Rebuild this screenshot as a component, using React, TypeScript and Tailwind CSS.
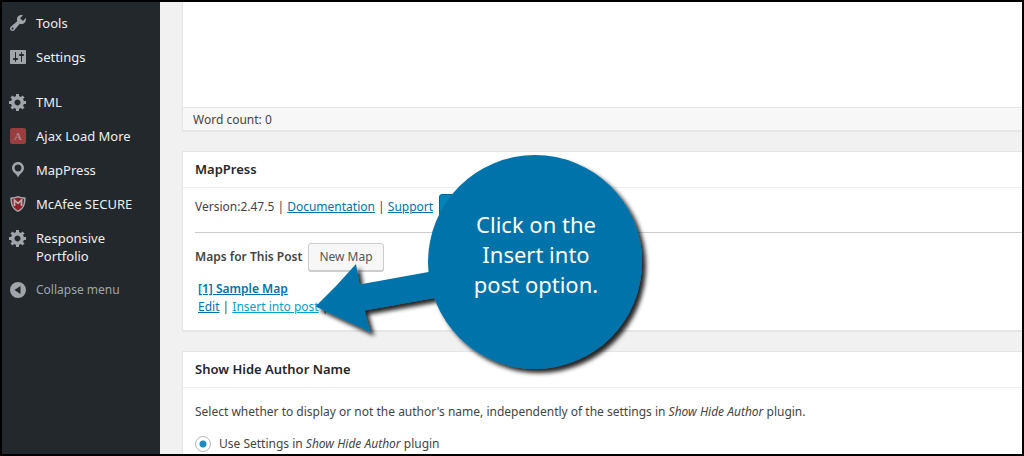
import type { ReactNode } from "react";

function Glyph({ d }: { d: string }) {
  return (
    <svg viewBox="0 0 20 20" className="size-5 shrink-0 fill-[#a0a5aa]" aria-hidden="true">
      <path fillRule="evenodd" d={d} />
    </svg>
  );
}

const gear =
  "M18 12h-2.18c-.17.7-.44 1.35-.81 1.93l1.54 1.54-2.1 2.1-1.54-1.54c-.58.36-1.23.63-1.91.79V19H8v-2.18c-.68-.16-1.33-.43-1.91-.79l-1.54 1.54-2.12-2.12 1.54-1.54c-.36-.58-.63-1.23-.79-1.91H1V9.03h2.17c.16-.7.44-1.35.8-1.94L2.43 5.55l2.1-2.1 1.54 1.54c.58-.37 1.24-.64 1.93-.81V2h3v2.18c.68.16 1.33.43 1.91.79l1.54-1.54 2.12 2.12-1.54 1.54c.36.59.64 1.24.8 1.94H18V12zm-8.5 1.5c1.66 0 3-1.34 3-3s-1.34-3-3-3-3 1.34-3 3 1.34 3 3 3z";
const wrench =
  "M16.68 9.77c-1.34 1.34-3.3 1.67-4.95.99l-5.41 6.52c-.99.99-2.59.99-3.58 0s-.99-2.59 0-3.57l6.52-5.42c-.68-1.65-.35-3.61.99-4.95 1.28-1.28 3.12-1.62 4.72-1.06l-2.89 2.89 2.82 2.82 2.86-2.87c.53 1.58.18 3.39-1.08 4.65zM3.81 16.21c.4.39 1.04.39 1.43 0 .4-.4.4-1.04 0-1.43-.39-.4-1.03-.4-1.43 0-.39.39-.39 1.03 0 1.43z";
const sliders =
  "M18 16V4c0-.55-.45-1-1-1H3c-.55 0-1 .45-1 1v12c0 .55.45 1 1 1h14c.55 0 1-.45 1-1zM8 11h1c.55 0 1 .45 1 1s-.45 1-1 1H8v1.5c0 .28-.22.5-.5.5s-.5-.22-.5-.5V13H6c-.55 0-1-.45-1-1s.45-1 1-1h1V5.5c0-.28.22-.5.5-.5s.5.22.5.5V11zm5-2h-1c-.55 0-1-.45-1-1s.45-1 1-1h1V5.5c0-.28.22-.5.5-.5s.5.22.5.5V7h1c.55 0 1 .45 1 1s-.45 1-1 1h-1v5.5c0 .28-.22.5-.5.5s-.5-.22-.5-.5V9z";
const pin =
  "M10 2C6.69 2 4 4.69 4 8c0 2.02 1.17 3.71 2.53 4.89.43.37 1.18.96 1.85 1.83.74.97 1.41 2.01 1.62 2.71.21-.7.88-1.74 1.62-2.71.67-.87 1.42-1.46 1.85-1.83C14.83 11.71 16 10.02 16 8c0-3.31-2.69-6-6-6zm0 2.56c1.9 0 3.44 1.54 3.44 3.44S11.9 11.44 10 11.44 6.56 9.9 6.56 8 8.1 4.56 10 4.56z";
const collapse =
  "M10 2a8 8 0 1 1 0 16a8 8 0 1 1 0-16zM12.5 6L6.5 10l6 4z";

function AjaxIcon() {
  return (
    <span className="flex size-5 shrink-0 items-center justify-center" aria-hidden="true">
      <span className="flex size-4 items-center justify-center rounded-[2px] bg-[#9c3c3e] font-['Liberation_Serif',serif] text-[11px] leading-none font-bold text-[#b08082]">
        A
      </span>
    </span>
  );
}

function ShieldIcon() {
  return (
    <svg viewBox="0 0 20 20" className="size-5 shrink-0" aria-hidden="true">
      <path d="M2.4 3.6C5.500 3.200 8 2.800 10 2c2 .8 4.500 1.200 7.600 1.600C17.700 11.500 15.500 15.500 10 18 4.500 15.500 2.300 11.500 2.400 3.600z" fill="#a8a8aa" />
      <path d="M3.900 4.900C6 4.600 8.300 4.300 10 3.600c1.700.7 4 1 6.100 1.300C16 10.900 14.300 14.200 10 16.400 5.700 14.200 4 10.900 3.900 4.900z" fill="#8e1f2b" />
      <path d="M6.500 12V6.200L10 9.300l3.500-3.100V12" fill="none" stroke="#b9b0b2" strokeWidth="1.800" />
    </svg>
  );
}

function MenuItem({ icon, children }: { icon: ReactNode; children: ReactNode }) {
  return (
    <li>
      <a href="#" className="flex gap-2 py-2 pr-3 pl-1.5 text-[13px] leading-[18px] text-[#eee]">
        <span className="-my-px">{icon}</span>
        <span>{children}</span>
      </a>
    </li>
  );
}

function Panel({ title, children }: { title: string; children: ReactNode }) {
  return (
    <section className="border border-r-0 border-[#e5e5e5] bg-white shadow-[0_1px_1px_rgba(0,0,0,0.04)]">
      <h2 className="border-b border-[#eee] px-3 py-2 text-[13px] leading-[19px] font-semibold text-[#23282d]">{title}</h2>
      {children}
    </section>
  );
}

function Link({ children }: { children: ReactNode }) {
  return (
    <a href="#" className="text-[#0073aa] underline">
      {children}
    </a>
  );
}

function Callout() {
  return (
    <div className="pointer-events-none absolute top-[151px] left-[310px] h-[230px] w-[344px]">
      <svg viewBox="312 153 344 230" className="size-full overflow-visible" aria-hidden="true">
        <defs>
          <filter id="cast" x="-10%" y="-10%" width="120%" height="125%">
            <feDropShadow dx="4" dy="4" stdDeviation="2" floodColor="#000" floodOpacity="0.85" />
          </filter>
        </defs>
        <g fill="#0073aa" filter="url(#cast)">
          <path d="M315.500 306.500L336 286L356 264L359.500 284.500L434 271L440 297L364.500 310.500L370.500 332z" />
          <circle cx="535" cy="262" r="107" />
        </g>
      </svg>
      <p className="absolute top-14 right-[14px] w-[212px] text-center text-[22px] leading-[30px] text-white">
        Click on the
        <br />
        Insert into
        <br />
        post option.
      </p>
    </div>
  );
}

export default function App() {
  return (
    <div className="relative flex h-screen overflow-hidden border-2 border-black bg-[#f1f1f1] font-['Noto_Sans','Open_Sans',sans-serif] text-xs text-[#444]">
      <nav className="w-[158px] shrink-0 bg-[#23282d] pt-1" aria-label="Admin menu">
        <ul>
          <MenuItem icon={<Glyph d={wrench} />}>Tools</MenuItem>
          <MenuItem icon={<Glyph d={sliders} />}>Settings</MenuItem>
        </ul>
        <ul className="mt-[11px]">
          <MenuItem icon={<Glyph d={gear} />}>TML</MenuItem>
          <MenuItem icon={<AjaxIcon />}>Ajax Load More</MenuItem>
          <MenuItem icon={<Glyph d={pin} />}>MapPress</MenuItem>
          <MenuItem icon={<ShieldIcon />}>McAfee SECURE</MenuItem>
          <MenuItem icon={<Glyph d={gear} />}>Responsive Portfolio</MenuItem>
        </ul>
        <button type="button" className="flex w-full items-center gap-2 py-[7px] pl-1.5 text-xs leading-5 text-[#a0a5aa]">
          <Glyph d={collapse} />
          Collapse menu
        </button>
      </nav>

      <main className="flex min-w-0 flex-1 flex-col gap-5 pl-[22px]">
        <section className="border-b border-l border-[#e5e5e5] bg-white shadow-[0_1px_1px_rgba(0,0,0,0.04)]">
          <div className="h-[105px]" />
          <div className="border-t border-[#e5e5e5] bg-[#f7f7f7] px-2.5 pt-[3px] pb-px leading-[18px]">Word count: 0</div>
        </section>

        <Panel title="MapPress">
          <div className="pt-1.5 pb-3.5 pl-3">
            <div className="flex items-center">
              <p className="leading-6">
                Version:2.47.5 | <Link>Documentation</Link> | <Link>Support</Link>
              </p>
              <button type="button" aria-label="Upgrade" className="ml-1.5 h-[26px] w-24 rounded-[3px] border border-[#006799] bg-[#0085ba]" />
            </div>
            <hr className="mt-3 mb-2.5 border-[#ccc]" />
            <div className="flex items-center gap-1.5">
              <h3 className="font-semibold">Maps for This Post</h3>
              <button type="button" className="h-7 rounded-[3px] border border-[#ccc] bg-[#f7f7f7] px-2.5 text-[#555] shadow-[0_1px_0_#ccc]">
                New Map
              </button>
            </div>
            <div className="mt-[9px] pl-[3px] leading-[18px]">
              <p className="font-semibold">
                <Link>[1] Sample Map</Link>
              </p>
              <p>
                <Link>Edit</Link> |{" "}
                <a href="#" className="text-[#00a0d2] underline">
                  Insert into post
                </a>{" "}
                |
              </p>
            </div>
          </div>
        </Panel>

        <Panel title="Show Hide Author Name">
          <div className="px-3 pt-3.5 pb-4">
            <p className="leading-5">
              Select whether to display or not the author's name, independently of the settings in <em>Show Hide Author</em> plugin.
            </p>
            <label className="mt-3 flex items-center gap-2 leading-5">
              <input
                type="radio"
                name="author"
                defaultChecked
                className="size-4 appearance-none rounded-full border border-[#b4b9be] bg-white bg-[radial-gradient(circle,#1e8cbe_3px,transparent_4px)]"
              />
              <span>
                Use Settings in <em>Show Hide Author</em> plugin
              </span>
            </label>
          </div>
        </Panel>
      </main>
      <Callout />
    </div>
  );
}
